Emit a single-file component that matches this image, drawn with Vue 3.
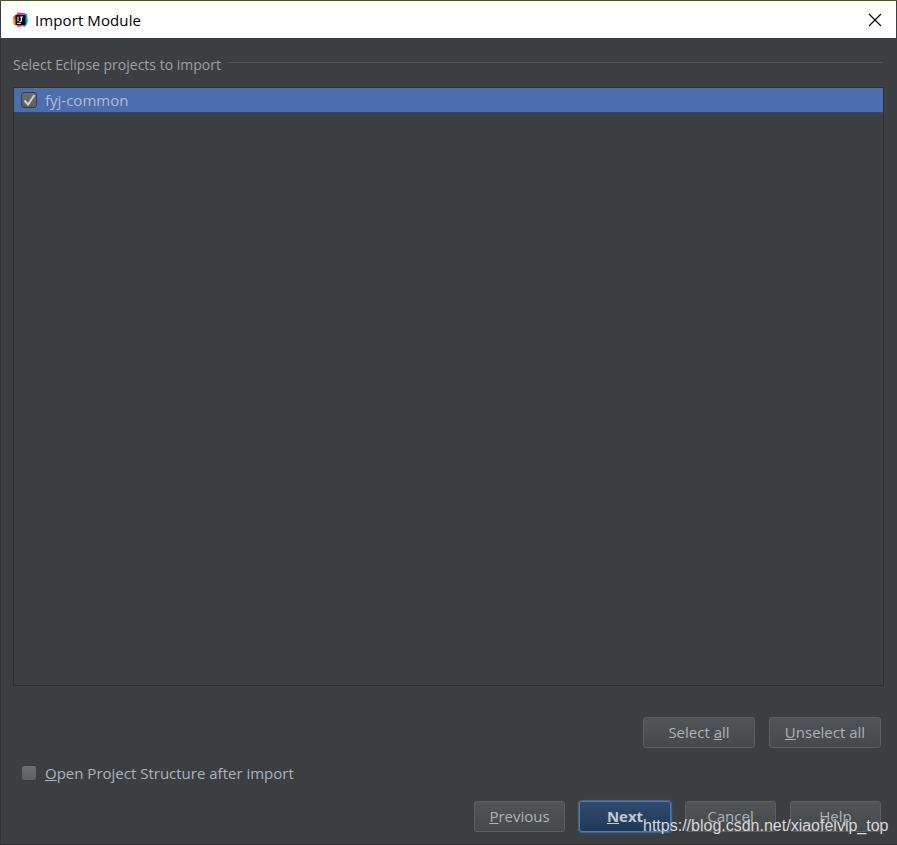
<script setup>
const groupLabel = 'Select Eclipse projects to import'
</script>

<template>
  <div class="window">
    <header class="titlebar">
      <svg class="logo" width="16" height="16" viewBox="0 0 16 16">
        <path d="M1 5 L6 1 L6 13 L2 12 Z" fill="#fc5a4c" />
        <path d="M0.500 9 L4 7 L6 14 L2 13 Z" fill="#f9a03c" />
        <path d="M5 0.500 L13 1 L15 6 L12 14 L5 15 Z" fill="#e8328a" />
        <path d="M11 1 L15 2 L16 10 L13 15 L10 14 Z" fill="#1f9ee8" />
        <rect x="3.500" y="3" width="10" height="10" fill="#000" />
        <rect x="5" y="10.800" width="4" height="1" fill="#fff" />
        <rect x="5.500" y="4.500" width="1" height="5" fill="#fff" />
        <path d="M8 4.500 h3 v1 h-1 v3.500 q0 1 -1 1 h-1.500 v-1 h1.200 v-3.500 h-0.700 z" fill="#fff" />
      </svg>
      <span class="title">Import Module</span>
      <svg class="close" width="14" height="14" viewBox="0 0 14 14">
        <path d="M1 1 L13 13 M13 1 L1 13" stroke="#000" stroke-width="1.100" fill="none" />
      </svg>
    </header>

    <main class="body">
      <div class="group">
        <span class="group-label">{{ groupLabel }}</span>
        <span class="group-line"></span>
      </div>

      <div class="list">
        <div class="row">
          <span class="check checked">
            <svg width="14" height="13" viewBox="0 0 14 13">
              <path d="M2.500 6.500 L6 10.500 L12.500 1" stroke="#d0d0d0" stroke-width="2" fill="none" />
            </svg>
          </span>
          <span class="row-text">fyj-common</span>
        </div>
      </div>

      <div class="select-actions">
        <button class="btn wide">Select <u>a</u>ll</button>
        <button class="btn wide"><u>U</u>nselect all</button>
      </div>

      <label class="open-row">
        <span class="check"></span>
        <span class="open-text"><u>O</u>pen Project Structure after import</span>
      </label>

      <div class="nav-actions">
        <button class="btn"><u>P</u>revious</button>
        <button class="btn primary"><u>N</u>ext</button>
        <button class="btn">Cancel</button>
        <button class="btn">Help</button>
      </div>
    </main>

    <div class="strip"></div>
    <span class="watermark">https://blog.csdn.net/xiaofeivip_top</span>
  </div>
</template>

<style>
html, body { margin: 0; padding: 0; background: #3c3f41; }
</style>

<style scoped>
.window {
  position: relative;
  width: 897px;
  height: 845px;
  box-sizing: border-box;
  overflow: hidden;
  display: flex;
  flex-direction: column;
  border-top: 1px solid #4c5a17;
  background: #3c3f41;
  font-family: "Open Sans", "Noto Sans", sans-serif;
}
.titlebar {
  height: 37px;
  flex: none;
  display: flex;
  align-items: center;
  background: #fff;
  margin: 0 1px;
  padding-left: 11px;
  box-sizing: border-box;
}
.logo { flex: none; margin-right: 7px; }
.title { font-size: 15px; color: #000; letter-spacing: 0.1px; }
.close { margin-left: auto; margin-right: 14px; }
.body {
  flex: 1;
  display: flex;
  flex-direction: column;
  padding: 0 13px 0 13px;
  border-left: 1px solid #2f3133;
  margin-left: 0;
  box-sizing: border-box;
  min-height: 0;
}
.body { padding-left: 12px; }
.group {
  height: 49px;
  flex: none;
  display: flex;
  align-items: center;
  gap: 7px;
  padding-right: 1px;
  padding-top: 3px;
  box-sizing: border-box;
}
.group-label { font-size: 14px; color: #9aa0a3; white-space: nowrap; }
.group-line { flex: 1; height: 1px; background: #515355; margin-top: -3px; }
.list {
  height: 599px;
  flex: none;
  box-sizing: border-box;
  border: 1px solid #2d3032;
  background: #3c3f41;
}
.row {
  height: 25px;
  display: flex;
  align-items: center;
  background: #4b6eaf;
  border-bottom: 1px solid #2f4674;
  padding-left: 7px;
  box-sizing: border-box;
}
.row-text { margin-left: 8px; font-size: 15px; color: #b5bcc2; }
.check {
  width: 16px;
  height: 16px;
  flex: none;
  box-sizing: border-box;
  border: 1px solid #3a3c3e;
  border-radius: 3px;
  background: linear-gradient(#6c6e70, #5c5e60);
  display: flex;
  align-items: center;
  justify-content: center;
}
.check.checked { background: linear-gradient(#6a6c6e, #5d5f61); }
.select-actions {
  display: flex;
  justify-content: flex-end;
  gap: 14px;
  margin-top: 31px;
  padding-right: 3px;
}
.btn {
  width: 112px;
  height: 31px;
  flex: none;
  padding: 0;
  box-sizing: border-box;
  border: 1px solid #5c5e60;
  border-radius: 3px;
  background: linear-gradient(#505456, #45494b);
  color: #a9b3bb;
  font: inherit;
  font-size: 15px;
  line-height: 29px;
}
.open-row {
  display: flex;
  align-items: center;
  margin-top: 16px;
  height: 18px;
  padding-left: 8px;
}
.open-text { margin-left: 8px; font-size: 15px; color: #aab2b9; }
.nav-actions {
  display: flex;
  justify-content: flex-end;
  gap: 14px;
  margin-top: 19px;
  padding-right: 3px;
}
.nav-actions .btn { width: 91px; }
.primary {
  width: 92px !important;
  background: linear-gradient(#2f4a6e, #223a59);
  border: 1px solid #4d7cb4;
  box-shadow: 0 0 1px 1px #3f6a9c;
  color: #c0c8d0;
  font-weight: 700;
}
.strip {
  position: absolute;
  left: 0;
  right: 0;
  bottom: 0;
  height: 1px;
  background: #2b2b2b;
}
.watermark {
  position: absolute;
  left: 643px;
  top: 816px;
  font-family: "Liberation Sans", Arial, sans-serif;
  font-size: 16px;
  color: #d8d8d8;
  white-space: nowrap;
}
</style>
